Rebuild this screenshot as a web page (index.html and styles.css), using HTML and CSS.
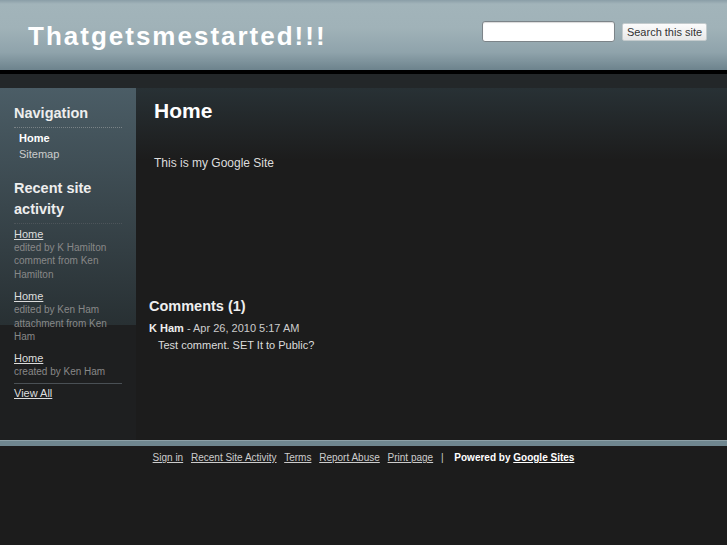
FILE: index.html
```html
<!DOCTYPE html>
<html lang="en">
<head>
    <meta charset="UTF-8">
    <meta name="viewport" content="width=device-width, initial-scale=1.0">
    <title>Thatgetsmestarted!!!</title>
    <link rel="stylesheet" href="styles.css">
</head>
<body>
    <div class="header">
        <h1 class="site-title">Thatgetsmestarted!!!</h1>
        <form class="search" onsubmit="return false">
            <input type="text" class="search-input">
            <button type="submit" class="search-btn">Search this site</button>
        </form>
    </div>
    <div class="header-strip"></div>

    <div class="page">
        <div class="sidebar">
            <h2 class="side-title">Navigation</h2>
            <ul class="nav">
                <li class="current">Home</li>
                <li><a href="#">Sitemap</a></li>
            </ul>

            <h2 class="side-title side-title-faint recent">Recent site activity</h2>
            <div class="activity">
                <div class="activity-item">
                    <a href="#" class="activity-link">Home</a>
                    <div class="activity-text">edited by K Hamilton<br>comment from Ken Hamilton</div>
                </div>
                <div class="activity-item">
                    <a href="#" class="activity-link">Home</a>
                    <div class="activity-text">edited by Ken Ham<br>attachment from Ken Ham</div>
                </div>
                <div class="activity-item">
                    <a href="#" class="activity-link">Home</a>
                    <div class="activity-text">created by Ken Ham</div>
                </div>
            </div>
            <div class="view-all"><a href="#">View All</a></div>
        </div>

        <div class="content">
            <h1 class="page-title">Home</h1>
            <p class="page-text">This is my Google Site</p>

            <div class="comments">
                <h3 class="comments-title">Comments (1)</h3>
                <div class="comment-meta"><b>K Ham</b> - Apr 26, 2010 5:17 AM</div>
                <div class="comment-body">Test comment. SET It to Public?</div>
            </div>
        </div>
    </div>

    <div class="footer">
        <a href="#">Sign in</a>
        <a href="#">Recent Site Activity</a>
        <a href="#">Terms</a>
        <a href="#">Report Abuse</a>
        <a href="#">Print page</a>
        <span class="sep">|</span>
        <span class="powered">Powered by <a href="#">Google Sites</a></span>
    </div>
</body>
</html>
```

FILE: styles.css
```css
body {
    margin: 0;
    background-color: #1c1c1c;
    font-family: "Liberation Sans", Arial, sans-serif;
    color: #ddd;
}
a {
    color: #ddd;
}
.header {
    display: flex;
    justify-content: space-between;
    align-items: flex-start;
    height: 70px;
    padding: 0 20px 0 28px;
    background: linear-gradient(#8a9ea7 0, #a2b4ba 4px, #a0b2b8 40%, #8fa3ab 75%, #6d838d 100%);
    border-bottom: 4px solid #000;
}
.site-title {
    margin: 0;
    padding-top: 21px;
    font-size: 26px;
    line-height: 30px;
    letter-spacing: 2px;
    color: #fff;
}
.search {
    display: flex;
    align-items: flex-start;
    gap: 7px;
    padding-top: 21px;
}
.search-input {
    box-sizing: border-box;
    width: 133px;
    height: 21px;
    margin: 0;
    border: 1px solid #7c8489;
    border-radius: 3px;
    background-color: #fff;
    box-shadow: inset 0 1px 1px rgba(0, 0, 0, 0.15);
}
.search-btn {
    box-sizing: border-box;
    width: 85px;
    height: 18px;
    margin: 2px 0 0;
    padding: 0;
    border: 1px solid #c4cbcd;
    border-radius: 2px;
    background: linear-gradient(#fcfcfc, #e8e8e8);
    font-family: "Liberation Sans", Arial, sans-serif;
    font-size: 11px;
    color: #333;
}
.header-strip {
    height: 14px;
    background-color: #232729;
}
.page {
    display: grid;
    grid-template-columns: 136px 1fr;
    min-height: 352px;
}
.sidebar {
    padding: 15px 14px 0;
    background: linear-gradient(#4b5d66 0, #283033 237px, #1e1f20 237px);
}
.side-title {
    margin: 0;
    padding-bottom: 3px;
    font-size: 14.5px;
    line-height: 21px;
    color: #eee;
    border-bottom: 1px dotted #7a8286;
}
.side-title-faint {
    border-bottom-color: #4d555a;
}
.recent {
    margin-top: 16px;
}
.nav {
    list-style: none;
    margin: 2px 0 0;
    padding: 0 0 0 5px;
    font-size: 11px;
    line-height: 16px;
}
.nav .current {
    font-weight: bold;
    color: #fff;
}
.nav a {
    color: #ccc;
    text-decoration: none;
}
.activity {
    margin: 3px 0 4px;
}
.activity-item + .activity-item {
    margin-top: 8px;
}
.activity-link {
    display: block;
    font-size: 11px;
    line-height: 14px;
    color: #ddd;
}
.activity-text {
    font-size: 10px;
    line-height: 13.4px;
    color: #888;
}
.view-all {
    padding-top: 2px;
    border-top: 1px solid #4a5055;
    font-size: 11px;
    line-height: 14px;
}
.content {
    padding: 10px 18px 0;
    background: linear-gradient(#283135 0, #1c1c1c 72px);
}
.page-title {
    margin: 0;
    font-size: 21px;
    line-height: 26px;
    color: #fff;
}
.page-text {
    margin: 31px 0 0;
    font-size: 12px;
    line-height: 16px;
    color: #ddd;
}
.comments {
    margin: 126px 0 0 -5px;
}
.comments-title {
    margin: 0;
    font-size: 14.5px;
    line-height: 18px;
    color: #eee;
}
.comment-meta {
    margin-top: 6px;
    font-size: 11px;
    line-height: 14px;
    color: #ccc;
}
.comment-meta b {
    color: #eee;
}
.comment-body {
    margin-top: 3px;
    padding-left: 9px;
    font-size: 11px;
    line-height: 14px;
    color: #ddd;
}
.footer {
    min-height: 90px;
    padding-top: 10px;
    border-top: 1px solid #8da0a7;
    box-shadow: inset 0 5px 0 #6f868f;
    text-align: center;
    font-size: 10px;
    line-height: 13px;
}
.footer a {
    color: #ccc;
    margin-right: 5px;
}
.footer .sep {
    color: #ccc;
    margin-right: 8px;
}
.powered {
    font-weight: bold;
    color: #fff;
}
.powered a {
    color: #fff;
    margin-right: 0;
}
```
